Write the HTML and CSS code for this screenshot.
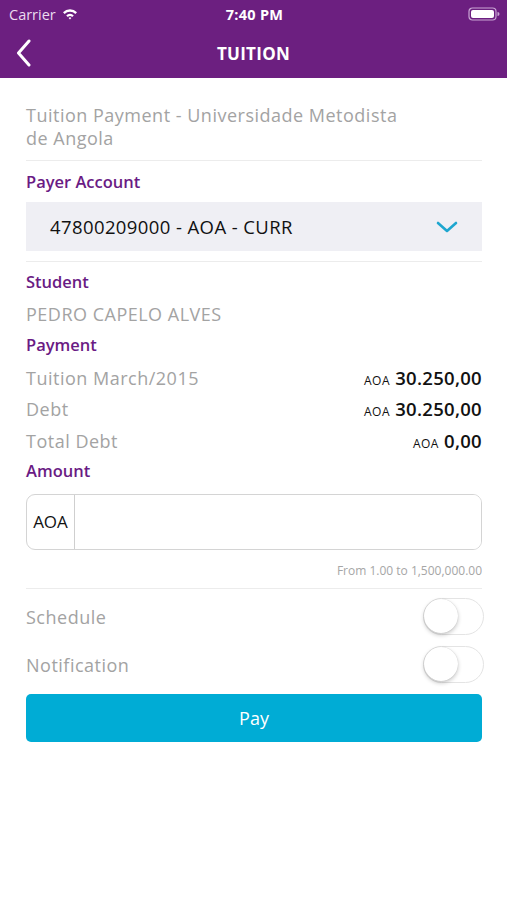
FILE: index.html
```html
<!DOCTYPE html>
<html lang="en">
<head>
  <meta charset="UTF-8" />
  <meta name="viewport" content="width=device-width, initial-scale=1.0"/>
  <title>Tuition</title>
  <link rel="stylesheet" href="styles.css">
</head>
<body>
  <header class="topbar">
    <div class="status">
      <div class="carrier">
        Carrier
        <svg class="wifi" width="16" height="12" viewBox="0 0 16 12">
          <path d="M1 4.2a10 10 0 0 1 14 0l-1.6 1.7a7.6 7.6 0 0 0-10.8 0z" fill="#fff"/>
          <path d="M4.2 7.4a5.4 5.4 0 0 1 7.6 0l-1.6 1.7a3.1 3.1 0 0 0-4.4 0z" fill="#fff"/>
          <path d="M6.6 10a2 2 0 0 1 2.8 0L8 11.5z" fill="#fff"/>
        </svg>
      </div>
      <div class="clock">7:40 PM</div>
      <div class="battery">
        <svg width="32" height="14" viewBox="0 0 32 14">
          <rect x="1" y="1" width="27" height="12" rx="3.5" fill="none" stroke="#c9a6d4" stroke-width="1.2"/>
          <rect x="3" y="3" width="23" height="8" rx="2" fill="#fff"/>
          <path d="M29.5 5v4a2 2 0 0 0 0-4z" fill="#c9a6d4"/>
        </svg>
      </div>
    </div>
    <nav class="navbar">
      <a class="back" href="#">
        <svg width="16" height="28" viewBox="0 0 16 28">
          <path d="M13 2 L2.5 14 L13 26" fill="none" stroke="#fff" stroke-width="3" stroke-linecap="round" stroke-linejoin="round"/>
        </svg>
      </a>
      <h1>TUITION</h1>
    </nav>
  </header>

  <main class="content">
    <p class="desc">Tuition Payment - Universidade Metodista de Angola</p>
    <hr class="divider">

    <div class="label">Payer Account</div>
    <div class="select">
      <span>47800209000 - AOA - CURR</span>
      <svg width="22" height="12" viewBox="0 0 22 12">
        <path d="M2 2 L11 10 L20 2" fill="none" stroke="#1ea6cf" stroke-width="2.6" stroke-linecap="round" stroke-linejoin="round"/>
      </svg>
    </div>
    <hr class="divider">

    <div class="info">
      <div class="label row">Student</div>
      <div class="row muted">PEDRO CAPELO ALVES</div>
      <div class="label row">Payment</div>
      <div class="row line">
        <span class="muted">Tuition March/2015</span>
        <span class="value"><small>AOA</small> 30.250,00</span>
      </div>
      <div class="row line">
        <span class="muted">Debt</span>
        <span class="value"><small>AOA</small> 30.250,00</span>
      </div>
      <div class="row line">
        <span class="muted">Total Debt</span>
        <span class="value"><small>AOA</small> 0,00</span>
      </div>
      <div class="label row">Amount</div>
    </div>

    <div class="amount">
      <span class="currency">AOA</span>
      <input type="text" aria-label="Amount">
    </div>
    <div class="hint">From 1.00 to 1,500,000.00</div>
    <hr class="divider">

    <div class="switch-row">
      <span class="muted">Schedule</span>
      <span class="toggle"><span class="knob"></span></span>
    </div>
    <div class="switch-row">
      <span class="muted">Notification</span>
      <span class="toggle"><span class="knob"></span></span>
    </div>

    <button class="pay">Pay</button>
  </main>
</body>
</html>
```

FILE: styles.css
```css
:root {
  --purple: #6c1f80;
  --label: #6a1b84;
  --gray: #a3a3a3;
  --line: #ececec;
  --blue: #00acd5;
  --text: #111111;
}
* { box-sizing: border-box; margin: 0; padding: 0; }
body {
  font-family: 'Open Sans', 'Noto Sans', sans-serif;
  background: #ffffff;
  color: var(--text);
  width: 507px;
}
.topbar { background: var(--purple); color: #fff; }
.status {
  height: 28px;
  display: flex;
  align-items: center;
  justify-content: space-between;
  padding: 0 7px 0 9px;
  font-size: 14.5px;
}
.carrier { display: flex; align-items: center; gap: 6px; width: 120px; color: #eadcef; }
.clock { font-weight: 700; font-size: 14.5px; letter-spacing: 0.3px; }
.battery { width: 120px; display: flex; justify-content: flex-end; }
.navbar {
  height: 50px;
  display: flex;
  align-items: center;
  justify-content: center;
  position: relative;
}
.back {
  position: absolute;
  left: 16px;
  top: 11px;
  display: flex;
}
.navbar h1 {
  font-size: 17px;
  font-weight: 700;
  letter-spacing: 0.3px;
}
.content { padding: 26px 25px 0 26px; }
.desc {
  font-size: 18px;
  line-height: 23px;
  letter-spacing: 0.5px;
  color: var(--gray);
  padding-right: 60px;
}
.divider {
  border: none;
  border-top: 1px solid var(--line);
  margin: 10px 0;
}
.label {
  color: var(--label);
  font-size: 16.5px;
  font-weight: 600;
  line-height: 22px;
}
.select {
  margin-top: 9px;
  height: 49px;
  background: #efeff4;
  display: flex;
  align-items: center;
  justify-content: space-between;
  padding: 0 24px 0 24px;
  font-size: 18.5px;
  letter-spacing: 0.4px;
  color: var(--text);
}
.info { margin-top: -5px; }
.row { line-height: 31.5px; height: 31.5px; font-size: 18px; }
.label.row { font-size: 16.5px; line-height: 30px; }
.muted { color: var(--gray); font-size: 18px; letter-spacing: 0.5px; }
.line { display: flex; justify-content: space-between; align-items: baseline; }
.value { font-size: 18.5px; font-weight: 600; color: var(--text); letter-spacing: 0.3px; }
.value small { font-size: 12px; font-weight: 400; letter-spacing: 0.5px; }
.amount {
  margin-top: 6px;
  height: 56px;
  border: 1px solid #d4d4d4;
  border-radius: 9px;
  display: flex;
  align-items: stretch;
  overflow: hidden;
}
.currency {
  width: 48px;
  border-right: 1px solid #cfcfcf;
  display: flex;
  align-items: center;
  justify-content: center;
  font-size: 17px;
}
.amount input {
  flex: 1;
  border: none;
  outline: none;
  font: inherit;
}
.hint {
  text-align: right;
  font-size: 12px;
  line-height: 16px;
  color: #a6a6a6;
  margin-top: 13px;
}
.hint + .divider { margin: 9px 0 4px; }
.switch-row {
  height: 48px;
  display: flex;
  align-items: center;
  justify-content: space-between;
}
.toggle {
  width: 61px;
  height: 37px;
  border-radius: 19px;
  border: 1.5px solid #e4e4e4;
  background: #fff;
  position: relative;
  margin-right: -2px;
}
.knob {
  position: absolute;
  left: 0;
  top: 0;
  width: 34px;
  height: 34px;
  border-radius: 50%;
  background: #fff;
  box-shadow: 0 2px 4px rgba(0,0,0,0.22), 0 0 1px rgba(0,0,0,0.2);
}
.pay {
  margin-top: 5px;
  width: 100%;
  height: 48px;
  border: none;
  border-radius: 5px;
  background: var(--blue);
  color: #fff;
  font-family: inherit;
  font-size: 18px;
}
```
